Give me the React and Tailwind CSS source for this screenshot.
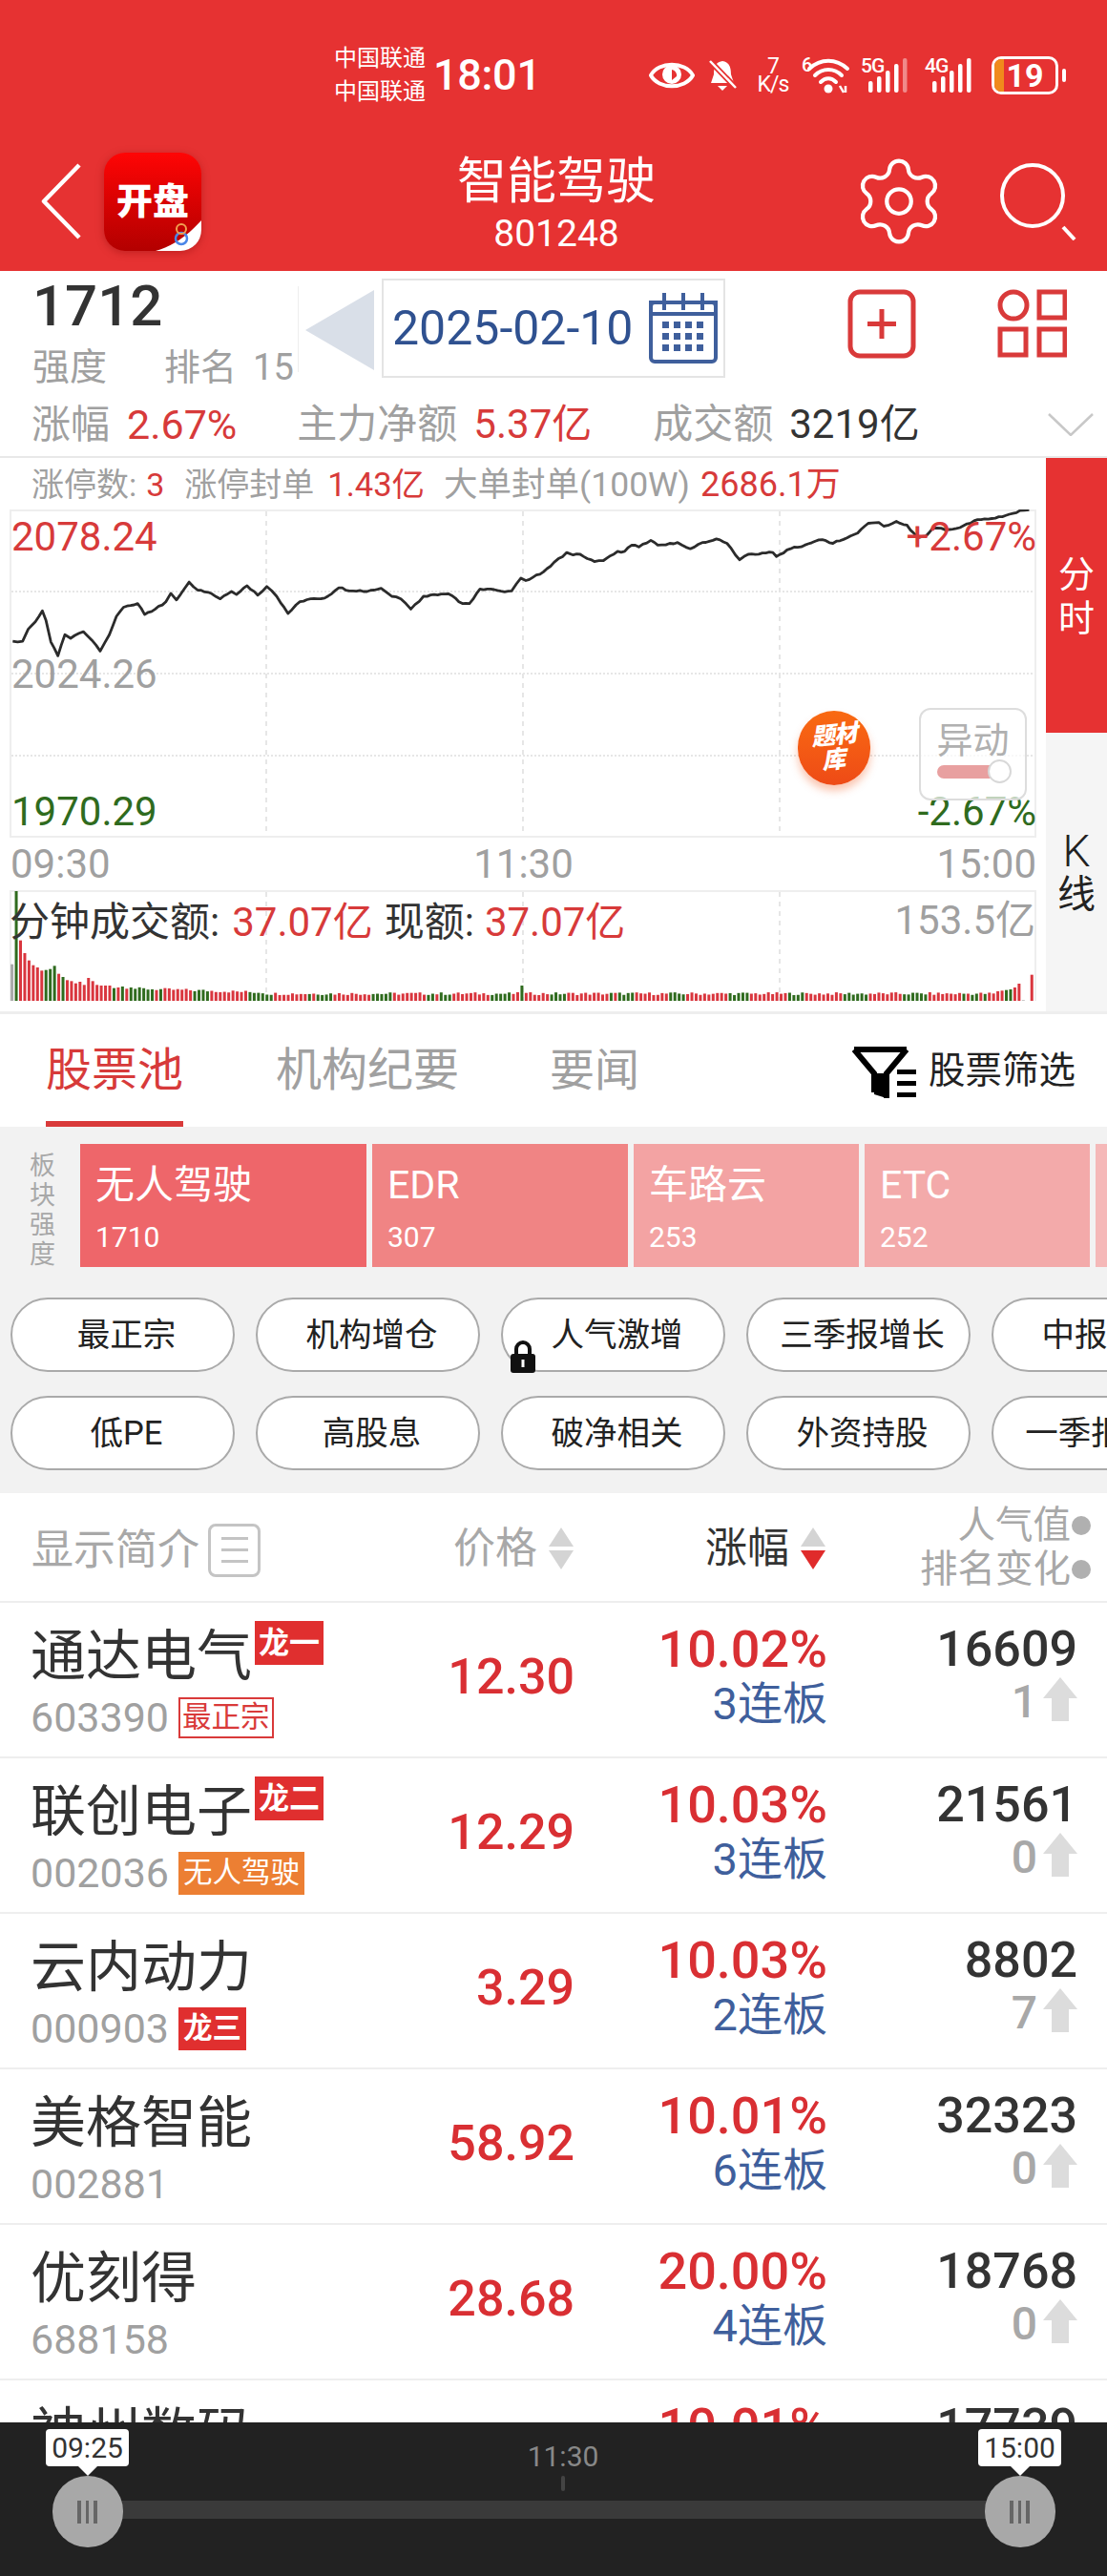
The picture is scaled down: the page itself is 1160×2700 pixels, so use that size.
import React from "react";
import { Settings } from "lucide-react";

const noise = (i) => {
  const s = Math.sin(i * 12.9898) * 43758.5453;
  return s - Math.floor(s);
};

const rawPts = [[18,528],[32,528],[40,495],[50,475],[60,445],[65,470],[72,530],[82,568],[92,510],[100,520],[118,502],[130,525],[142,555],[155,510],[165,460],[175,435],[195,425],[205,455],[220,440],[235,420],[242,397],[250,415],[268,366],[280,388],[300,398],[312,412],[328,392],[335,400],[350,376],[365,402],[378,378],[392,405],[408,452],[425,420],[440,412],[460,410],[480,382],[500,390],[520,392],[540,383],[555,405],[568,412],[582,440],[600,405],[615,400],[635,398],[655,425],[665,425],[680,385],[695,385],[715,393],[725,390],[738,355],[745,362],[770,338],[785,312],[803,285],[812,292],[822,290],[842,310],[855,307],[875,282],[885,282],[895,265],[905,270],[922,252],[932,265],[960,258],[978,275],[995,258],[1015,248],[1030,260],[1048,305],[1060,290],[1095,285],[1100,296],[1120,275],[1140,265],[1165,250],[1180,260],[1200,245],[1215,232],[1230,205],[1245,203],[1252,213],[1270,200],[1285,210],[1300,245],[1312,240],[1322,218],[1345,222],[1365,212],[1385,195],[1405,192],[1435,178],[1445,170],[1458,168]];
const linePts = rawPts
  .flatMap(([x, y], i) => {
    const next = rawPts[i + 1];
    const out = [[x / 1.352 - 10, y / 2.613 + 470 - 534]];
    if (next) {
      const steps = Math.max(1, Math.floor((next[0] - x) / 5));
      for (let k = 1; k < steps; k++) {
        const t = k / steps;
        out.push([
          (x + (next[0] - x) * t) / 1.352 - 10,
          (y + (next[1] - y) * t) / 2.613 + 470 - 534 + (noise(i * 7 + k) - 0.5) * 1.8,
        ]);
      }
    }
    return out;
  })
  .map(([x, y]) => `${x.toFixed(1)},${y.toFixed(1)}`)
  .join(" ");

const headBars = [[115,"#aaa"],[345,"#2f6b1e"],[190,"#d9363e"],[150,"#d9363e"],[127,"#d9363e"],[112,"#d9363e"],[105,"#d9363e"],[95,"#d9363e"],[97,"#2f6b1e"],[100,"#2f6b1e"],[110,"#2f6b1e"],[85,"#d9363e"],[75,"#2f6b1e"],[65,"#d9363e"],[62,"#d9363e"],[55,"#d9363e"],[60,"#d9363e"],[50,"#d9363e"],[72,"#d9363e"],[62,"#d9363e"],[50,"#d9363e"],[48,"#d9363e"],[48,"#d9363e"],[48,"#d9363e"],[40,"#2f6b1e"],[42,"#d9363e"],[45,"#2f6b1e"],[38,"#d9363e"],[42,"#2f6b1e"]];
const tailBars = [[30,"#d9363e"],[32,"#d9363e"],[34,"#2f6b1e"],[36,"#2f6b1e"],[42,"#d9363e"],[54,"#d9363e"],[2,"#aaa"],[0,"#fff"],[82,"#d9363e"]];
const bars = [];
for (let i = 0; i < 241; i++) {
  let h, c;
  if (i < headBars.length) [h, c] = headBars[i];
  else if (i >= 241 - tailBars.length) [h, c] = tailBars[i - (241 - tailBars.length)];
  else {
    const decay = i < 60 ? 36 - (i - 29) * 0.4 : 20;
    h = decay + noise(i) * 9 - 2;
    c = Math.sin(i * 0.45) + noise(i + 300) * 1.2 > 1.05 ? "#2f6b1e" : "#d9363e";
    if (i === 120) { h = 48; c = "#2f6b1e"; }
  }
  bars.push({ x: (15 + i * 6.02) / 1.352 - 10, h: h / 3, c });
}

const tiles = [
  { t: "无人驾驶", n: "1710", w: "w-[300px]", bg: "bg-[#ee666a]" },
  { t: "EDR", n: "307", w: "w-[268px]", bg: "bg-[#f08484]" },
  { t: "车路云", n: "253", w: "w-[236px]", bg: "bg-[#f3a3a3]" },
  { t: "ETC", n: "252", w: "w-[236px]", bg: "bg-[#f3aaaa]" },
  { t: "", n: "", w: "w-[100px]", bg: "bg-[#f5b8b8]" },
];
const pills1 = ["最正宗", "机构增仓", "人气激增", "三季报增长", "中报增长"];
const pills2 = ["低PE", "高股息", "破净相关", "外资持股", "一季报增长"];

const rows = [
  { name: "通达电气", code: "603390", dragon: "龙一", tag: "最正宗", tagType: "outline", price: "12.30", pct: "10.02%", lb: "3连板", pop: "16609", rank: "1" },
  { name: "联创电子", code: "002036", dragon: "龙二", tag: "无人驾驶", tagType: "orange", price: "12.29", pct: "10.03%", lb: "3连板", pop: "21561", rank: "0" },
  { name: "云内动力", code: "000903", tag: "龙三", tagType: "red", price: "3.29", pct: "10.03%", lb: "2连板", pop: "8802", rank: "7" },
  { name: "美格智能", code: "002881", price: "58.92", pct: "10.01%", lb: "6连板", pop: "32323", rank: "0" },
  { name: "优刻得", code: "688158", price: "28.68", pct: "20.00%", lb: "4连板", pop: "18768", rank: "0" },
  { name: "神州数码", code: "000034", price: "38.56", pct: "10.01%", lb: "2连板", pop: "17739", rank: "0" },
];

function SortArrows({ active }) {
  return (
    <svg width="26" height="44" viewBox="0 0 26 44" className="shrink-0">
      <path d="M13 0 L26 20 L0 20 Z" fill="#d4d4d4" />
      <path d="M13 44 L26 24 L0 24 Z" fill={active ? "#e02b2b" : "#d4d4d4"} />
    </svg>
  );
}

function Signal({ label, faded }) {
  return (
    <div className="flex items-end relative w-[56px] h-[40px]">
      <span className="absolute left-0 top-[-2px] text-[21px] leading-[24px] font-medium text-white tracking-[-1px]">{label}</span>
      <svg width="56" height="40" viewBox="0 0 56 40">
        {[[8,12],[17,17],[26,23],[35,30]].map(([x, h]) => (
          <rect key={x} x={x} y={38 - h} width="4.5" height={h} rx="2" fill="#fff" />
        ))}
        <rect x="44" y="2" width="4.5" height="36" rx="2" fill={faded ? "#f08a8a" : "#fff"} />
      </svg>
    </div>
  );
}

function StatusBar() {
  return (
    <div className="flex items-center h-[57px] mt-[50px] ml-[350px] text-white">
      <div className="w-[96px] text-[24px] leading-[35px]">
        <div>中国联通</div>
        <div>中国联通</div>
      </div>
      <div className="ml-[8px] w-[109px] text-[45px] leading-[50px] font-medium tracking-[-0.3px]">18:01</div>
      <svg className="ml-[117px]" width="48" height="34" viewBox="0 0 48 34">
        <path d="M2 17 C10 2 38 2 46 17 C38 32 10 32 2 17 Z" fill="none" stroke="#fff" strokeWidth="4" />
        <circle cx="24" cy="16" r="10" fill="#fff" />
        <path d="M24 11 A6 6 0 0 1 29 18 L24 22 Z" fill="#e63232" />
      </svg>
      <svg className="ml-[13px]" width="32" height="36" viewBox="0 0 32 36">
        <path d="M16 3 C8 4 7 11 7 17 L4 26 L28 26 L25 17 C25 11 24 4 16 3 Z" fill="#fff" />
        <path d="M11 29 H21 L16 34 Z" fill="#fff" />
        <path d="M3 3 L30 31" stroke="#e63232" strokeWidth="6" />
        <path d="M3 3 L30 31" stroke="#fff" strokeWidth="2.5" />
      </svg>
      <div className="ml-[18px] w-[38px] flex flex-col items-center text-[23px] leading-[19px] tracking-[-1px]">
        <span>7</span>
        <span>K/s</span>
      </div>
      <div className="ml-[11px] relative w-[52px] h-[38px]">
        <span className="absolute left-0 top-[-2px] text-[20px] leading-[20px] font-medium">6</span>
        <svg width="52" height="38" viewBox="0 0 52 38">
          <path d="M8 12 C20 1 36 1 48 12" fill="none" stroke="#fff" strokeWidth="4" strokeLinecap="round" />
          <path d="M14 19 C22 11 34 11 42 19" fill="none" stroke="#fff" strokeWidth="4" strokeLinecap="round" />
          <path d="M20 26 C25 21 31 21 36 26" fill="none" stroke="#fff" strokeWidth="4" strokeLinecap="round" />
          <circle cx="28" cy="33" r="4.5" fill="#fff" />
          <path d="M40 30 L44 37 M46 37 L46 30" stroke="#fff" strokeWidth="2.5" />
        </svg>
      </div>
      <div className="ml-[10px]"><Signal label="5G" faded /></div>
      <div className="ml-[11px]"><Signal label="4G" /></div>
      <div className="ml-[14px] relative w-[70px] h-[40px] rounded-[10px] border-[3px] border-white overflow-hidden flex items-center justify-center">
        <div className="absolute left-0 top-0 bottom-0 w-[10px] bg-[#f08a1c]" />
        <span className="relative text-[34px] leading-[36px] font-bold">19</span>
      </div>
      <div className="ml-[4px] w-[4px] h-[14px] bg-white rounded-full" />
    </div>
  );
}

function Logo() {
  return (
    <div className="relative w-[102px] h-[103px] rounded-[22px] overflow-hidden bg-gradient-to-b from-[#ff0505] to-[#b30000] flex items-center justify-center shadow-[0_2px_8px_rgba(120,0,0,0.35)]">
      <span className="text-[38px] leading-[44px] font-black text-white whitespace-nowrap">开盘</span>
      <svg className="absolute right-0 bottom-0" width="48" height="32" viewBox="0 0 48 32">
        <path d="M0 32 C14 28 30 20 48 0 L48 32 Z" fill="#fff" />
        <circle cx="27" cy="19" r="6" fill="none" stroke="#4a86e8" strokeWidth="2.5" />
        <circle cx="27" cy="9" r="5" fill="none" stroke="#f0a050" strokeWidth="2" />
      </svg>
    </div>
  );
}

function Nav() {
  return (
    <div className="flex items-center h-[124px] mt-[42px] text-white">
      <div className="w-[373px] flex items-center">
        <svg className="ml-[43px]" width="42" height="80" viewBox="0 0 42 80">
          <path d="M40 2 L3 40 L40 78" fill="none" stroke="#fff" strokeWidth="4.5" strokeLinejoin="round" />
        </svg>
        <div className="ml-[24px]"><Logo /></div>
      </div>
      <div className="w-[420px] flex flex-col items-center pt-[4px]">
        <div className="text-[52px] leading-[64px]">智能驾驶</div>
        <div className="text-[39px] leading-[44px]">801248</div>
      </div>
      <div className="flex items-center pl-[98px]">
        <Settings size={102} strokeWidth={1} color="#fff" />
        <svg className="ml-[55px]" width="80" height="82" viewBox="0 0 80 82">
          <circle cx="34" cy="35" r="32" fill="none" stroke="#fff" strokeWidth="4" />
          <path d="M66 68 L78 81" stroke="#fff" strokeWidth="4" />
        </svg>
      </div>
    </div>
  );
}

function InfoPanel() {
  return (
    <div className="h-[194px] bg-white">
      <div className="flex h-[136px]">
        <div className="w-[312px] pl-[34px] pt-[7px]">
          <div className="text-[60px] leading-[60px] font-medium text-[#333]">1712</div>
          <div className="flex mt-[12px] text-[39px] leading-[44px] text-[#a0a0a0]">
            <span>强度</span>
            <span className="ml-[60px] text-[38px]">排名</span>
            <span className="ml-[17px] text-[38px]">15</span>
          </div>
        </div>
        <div className="w-px h-[90px] mt-[16px] bg-[#eeeeee]" />
        <svg className="ml-[7px] mt-[20px]" width="72" height="84" viewBox="0 0 72 84">
          <path d="M72 0 L72 84 L0 42 Z" fill="#d9dfe8" />
        </svg>
        <div className="ml-[8px] mt-[8px] w-[360px] h-[104px] border-2 border-[#e4e4e4] flex items-center pl-[9px]">
          <span className="text-[50px] leading-[50px] text-[#2f5190] w-[269px] whitespace-nowrap">2025-02-10</span>
          <svg width="72" height="74" viewBox="0 0 72 74">
            <rect x="2" y="10" width="68" height="62" rx="4" fill="none" stroke="#3f5f9c" strokeWidth="4" />
            <rect x="2" y="10" width="68" height="12" fill="none" stroke="#3f5f9c" strokeWidth="4" />
            {[16, 36, 56].map((x) => <path key={x} d={`M${x} 0 V18`} stroke="#3f5f9c" strokeWidth="4" />)}
            {[30, 42, 54].map((y) => [14, 26, 38, 50].map((x) => (
              <rect key={`${x}-${y}`} x={x} y={y} width="7" height="7" fill="#3f5f9c" />
            )))}
          </svg>
        </div>
        <svg className="ml-[128px] mt-[19px]" width="72" height="73" viewBox="0 0 72 73">
          <rect x="3" y="3" width="66" height="67" rx="10" fill="none" stroke="#d93a3a" strokeWidth="5" />
          <path d="M36 21 V52 M21 36.5 H51" stroke="#d93a3a" strokeWidth="5" />
        </svg>
        <svg className="ml-[85px] mt-[19px]" width="73" height="72" viewBox="0 0 73 72">
          <circle cx="17" cy="17" r="14" fill="none" stroke="#d93a3a" strokeWidth="5" />
          <rect x="44" y="3" width="27" height="27" fill="none" stroke="#d93a3a" strokeWidth="5" />
          <rect x="3" y="42" width="27" height="27" fill="none" stroke="#d93a3a" strokeWidth="5" />
          <rect x="44" y="42" width="27" height="27" fill="none" stroke="#d93a3a" strokeWidth="5" />
        </svg>
      </div>
      <div className="flex items-center h-[50px] pl-[33px] text-[42px] leading-[50px] whitespace-nowrap">
        <span className="text-[#a0a0a0] text-[41px]">涨幅</span>
        <span className="ml-[18px] text-[#d73a3a] text-[43px]">2.67%</span>
        <span className="ml-[63px] text-[#a0a0a0]">主力净额</span>
        <span className="ml-[17px] text-[#d73a3a]">5.37亿</span>
        <span className="ml-[64px] text-[#a0a0a0]">成交额</span>
        <span className="ml-[17px] text-[#333]">3219亿</span>
        <svg className="ml-[134px]" width="48" height="24" viewBox="0 0 48 24">
          <path d="M1 1 L24 23 L47 1" fill="none" stroke="#c8c8c8" strokeWidth="2.5" />
        </svg>
      </div>
    </div>
  );
}

function Chart() {
  return (
    <div className="relative ml-[10px] w-[1076px] h-[344px] border-2 border-[#eeeeee]">
      <svg className="absolute left-[-2px] top-[-2px]" width="1076" height="344" viewBox="0 0 1076 344">
        {[86, 172, 258].map((y) => <path key={y} d={`M2 ${y} H1074`} stroke="#e6e6e6" strokeWidth="2" strokeDasharray="2 2" />)}
        {[269, 538, 807].map((x) => <path key={x} d={`M${x} 2 V342`} stroke="#e6e6e6" strokeWidth="2" strokeDasharray="5 5" />)}
        <polyline points={linePts} fill="none" stroke="#2b2b2b" strokeWidth="2.8" strokeLinejoin="round" />
      </svg>
      <span className="absolute left-[0px] top-[2px] text-[42px] leading-[50px] text-[#d73a3a]">2078.24</span>
      <span className="absolute right-[-2px] top-[2px] text-[42px] leading-[50px] text-[#d73a3a]">+2.67%</span>
      <span className="absolute left-[0px] top-[146px] text-[42px] leading-[50px] text-[#a0a0a0]">2024.26</span>
      <span className="absolute left-[0px] top-[290px] text-[42px] leading-[50px] text-[#2f6b1e]">1970.29</span>
      <span className="absolute right-[-2px] top-[290px] text-[42px] leading-[50px] text-[#2f6b1e]">-2.67%</span>
      <div className="absolute left-[824px] top-[209px] w-[76px] h-[78px] rounded-full bg-gradient-to-b from-[#f96a12] to-[#ee4a16] shadow-[0_6px_8px_rgba(240,90,30,0.35)] flex flex-col items-center justify-center text-white font-black italic leading-[26px] text-[25px]">
        <span className="tracking-[-1px] -rotate-6">题材</span>
        <span className="-rotate-6">库</span>
      </div>
      <div className="absolute left-[951px] top-[206px] w-[113px] h-[97px] rounded-[12px] border-2 border-[#dddddd] bg-white/70 flex flex-col items-center pt-[10px]">
        <span className="text-[38px] leading-[44px] text-[#b0b0b0]">异动</span>
        <div className="relative mt-[4px] w-[76px] h-[14px] rounded-full bg-[#e8a0a0]">
          <div className="absolute right-[-2px] top-[-6px] w-[25px] h-[25px] rounded-full bg-white border-2 border-[#d8d8d8]" />
        </div>
      </div>
    </div>
  );
}

function Volume() {
  return (
    <div className="relative ml-[10px] w-[1076px] h-[116px] border-2 border-b-0 border-[#eeeeee]">
      <svg className="absolute left-[-2px] top-[-2px]" width="1076" height="116" viewBox="0 0 1076 116">
        {[269, 538, 807].map((x) => <path key={x} d={`M${x} 2 V116`} stroke="#e6e6e6" strokeWidth="2" strokeDasharray="5 5" />)}
        {bars.map((b, i) => (
          <rect key={i} x={b.x} y={116 - b.h} width="3" height={b.h} fill={b.c} />
        ))}
      </svg>
      <div className="absolute left-[-2px] top-[8px] flex text-[42px] leading-[48px] whitespace-nowrap">
        <span className="text-[#333]">分钟成交额:</span>
        <span className="ml-[13px] text-[#d73a3a]">37.07亿</span>
        <span className="ml-[12px] text-[#333]">现额:</span>
        <span className="ml-[11px] text-[#d73a3a]">37.07亿</span>
      </div>
      <span className="absolute right-[-1px] top-[6px] text-[42px] leading-[48px] text-[#a0a0a0]">153.5亿</span>
    </div>
  );
}

function ChartSection() {
  return (
    <div className="flex h-[582px] border-t-2 border-[#e8e8e8]">
      <div className="w-[1096px]">
        <div className="flex items-center h-[54px] pl-[33px] pt-[2px] text-[34px] leading-[40px] whitespace-nowrap text-[#a0a0a0]">
          <span>涨停数:</span>
          <span className="ml-[10px] text-[#d73a3a]">3</span>
          <span className="ml-[21px]">涨停封单</span>
          <span className="ml-[14px] text-[#d73a3a] text-[34.5px]">1.43亿</span>
          <span className="ml-[20px] text-[35.5px]">大单封单(100W)</span>
          <span className="ml-[11px] text-[#d73a3a] text-[36px]">2686.1万</span>
        </div>
        <Chart />
        <div className="flex justify-between items-center h-[55px] ml-[11px] w-[1075px] text-[42px] leading-[50px] text-[#a0a0a0]">
          <span>09:30</span>
          <span>11:30</span>
          <span>15:00</span>
        </div>
        <Volume />
      </div>
      <div className="w-[64px] flex flex-col">
        <div className="h-[288px] bg-[#e63232] flex flex-col items-center justify-center pt-[2px] text-white text-[38px] leading-[46px]">
          <span>分</span>
          <span>时</span>
        </div>
        <div className="flex-1 bg-[#f5f5f5] flex flex-col items-center pt-[101px] text-[#222] text-[40px] leading-[46px]">
          <span className="font-light text-[46px]">K</span>
          <span>线</span>
        </div>
      </div>
    </div>
  );
}

function Tabs() {
  return (
    <div className="flex h-[121px] border-t-[3px] border-[#eeeeee] bg-white">
      <div className="ml-[48px] w-[144px] h-[118px] flex flex-col">
        <span className="mt-[31px] text-[48px] leading-[56px] text-[#d73a3a] whitespace-nowrap">股票池</span>
        <div className="mt-auto h-[6px] bg-[#d93a3a]" />
      </div>
      <span className="ml-[97px] mt-[31px] text-[48px] leading-[56px] text-[#a0a0a0] whitespace-nowrap">机构纪要</span>
      <span className="ml-[95px] mt-[31px] text-[47px] leading-[56px] text-[#a0a0a0] whitespace-nowrap">要闻</span>
      <svg className="ml-[222px] mt-[34px]" width="68" height="54" viewBox="0 0 68 54">
        <path d="M3 3 H58 M3 3 L24 28 V48 M58 3 L37 28 V54" fill="none" stroke="#000" strokeWidth="6" />
        <path d="M24 28 V50 L37 54 V28 Z" fill="#000" />
        <rect x="48" y="24" width="20" height="5" fill="#000" />
        <rect x="48" y="36" width="20" height="5" fill="#000" />
        <rect x="48" y="48" width="20" height="5" fill="#000" />
      </svg>
      <span className="ml-[13px] mt-[36px] text-[38.5px] leading-[46px] text-[#222] whitespace-nowrap">股票筛选</span>
    </div>
  );
}

function Pill({ text, lock }) {
  return (
    <div className="relative shrink-0 w-[235px] h-[78px] rounded-[39px] border-2 border-[#aaaaaa] bg-white flex items-center justify-center pl-[8px] text-[34.5px] leading-[40px] text-[#222] whitespace-nowrap overflow-visible">
      {text}
      {lock && (
        <svg className="absolute left-[7px] bottom-[-3px]" width="28" height="34" viewBox="0 0 28 34">
          <path d="M7 16 V9 A7 7 0 0 1 21 9 V16" fill="none" stroke="#111" strokeWidth="4" />
          <rect x="1" y="14" width="26" height="20" rx="3" fill="#111" />
          <rect x="12.5" y="20" width="3" height="8" fill="#fff" />
        </svg>
      )}
    </div>
  );
}

function Sectors() {
  return (
    <div className="h-[384px] bg-[#f2f2f2] overflow-hidden">
      <div className="flex pt-[18px] h-[147px]">
        <div className="w-[84px] shrink-0 pl-[31px] pt-[8px] flex flex-col text-[27px] leading-[31px] text-[#a8a8a8]">
          <span>板</span><span>块</span><span>强</span><span>度</span>
        </div>
        <div className="flex gap-[6px] text-white whitespace-nowrap">
          {tiles.map((t, i) => (
            <div key={i} className={`${t.w} ${t.bg} shrink-0 h-[129px] pl-[16px] pt-[19px]`}>
              <div className="text-[41px] leading-[48px]">{t.t}</div>
              <div className="mt-[14px] text-[30px] leading-[34px]">{t.n}</div>
            </div>
          ))}
        </div>
      </div>
      <div className="flex gap-[22px] pl-[11px] mt-[32px]">
        {pills1.map((p, i) => <Pill key={p} text={p} lock={i === 2} />)}
      </div>
      <div className="flex gap-[22px] pl-[11px] mt-[25px]">
        {pills2.map((p) => <Pill key={p} text={p} />)}
      </div>
    </div>
  );
}

function TableHead() {
  return (
    <div className="flex h-[115px] border-b-2 border-[#eeeeee] bg-white items-center">
      <div className="w-[475px] pl-[33px] pt-[6px] flex items-center">
        <span className="text-[44px] leading-[50px] text-[#a8a8a8] whitespace-nowrap">显示简介</span>
        <div className="ml-[9px] w-[55px] h-[56px] rounded-[8px] border-[3px] border-[#c4c4c4] flex flex-col items-center justify-center gap-[9px]">
          <div className="w-[28px] h-[3px] bg-[#c4c4c4]" />
          <div className="w-[28px] h-[3px] bg-[#c4c4c4]" />
          <div className="w-[28px] h-[3px] bg-[#c4c4c4]" />
        </div>
      </div>
      <div className="w-[125px] pt-[3px] flex items-center gap-[12px]">
        <span className="text-[44px] leading-[50px] text-[#a8a8a8] whitespace-nowrap">价格</span>
        <SortArrows />
      </div>
      <div className="w-[265px] pt-[3px] flex items-center justify-end gap-[12px]">
        <span className="text-[44px] leading-[50px] text-[#333] whitespace-nowrap">涨幅</span>
        <SortArrows active />
      </div>
      <div className="flex-1 flex flex-col items-end pr-[17px] text-[39.5px] leading-[46px] text-[#a8a8a8] whitespace-nowrap">
        <div className="flex items-center gap-[1px]">人气值<span className="w-[20px] h-[20px] rounded-full bg-[#b0b0b0]" /></div>
        <div className="flex items-center gap-[1px]">排名变化<span className="w-[20px] h-[20px] rounded-full bg-[#b0b0b0]" /></div>
      </div>
    </div>
  );
}

function Tag({ text, type }) {
  const cls =
    type === "outline"
      ? "border-2 border-[#d93a3a] bg-white text-[#d93a3a] h-[43px] px-[2px]"
      : type === "orange"
      ? "bg-[#ec7f33] text-white h-[45px] px-[5px]"
      : "bg-[#e02f2f] text-white h-[45px] px-[5px] font-bold";
  return (
    <span className={`ml-[10px] flex items-center text-[30.5px] leading-[36px] whitespace-nowrap ${cls}`}>{text}</span>
  );
}

function Row({ r }) {
  return (
    <div className="flex h-[163px] shrink-0 border-b-2 border-[#eeeeee] bg-white">
      <div className="w-[430px] pl-[32px]">
        <div className="flex h-[97px] items-start">
          <span className="mt-[24px] text-[58px] leading-[64px] text-[#333] whitespace-nowrap">{r.name}</span>
          {r.dragon && (
            <span className="ml-[3px] mt-[19px] w-[72px] h-[46px] bg-[#e02f2f] text-white flex items-center justify-center text-[32px] leading-[36px] font-bold">
              {r.dragon}
            </span>
          )}
        </div>
        <div className="flex items-center h-[46px]">
          <span className="text-[43px] leading-[46px] text-[#a0a0a0]">{r.code}</span>
          {r.tag && <Tag text={r.tag} type={r.tagType} />}
        </div>
      </div>
      <div className="w-[172px] flex justify-end items-center pb-[6px] text-[52px] leading-[60px] font-medium text-[#d92f33]">
        {r.price}
      </div>
      <div className="w-[265px] flex flex-col items-end pt-[22px]">
        <span className="text-[54px] leading-[54px] font-medium text-[#d92f33]">{r.pct}</span>
        <span className="mt-[2px] text-[47px] leading-[56px] text-[#3f5f9c] whitespace-nowrap">{r.lb}</span>
      </div>
      <div className="w-[262px] flex flex-col items-end pt-[22px]">
        <span className="text-[52px] leading-[54px] font-medium text-[#333]">{r.pop}</span>
        <div className="flex items-center h-[56px] mt-0">
          <span className="text-[48px] leading-[56px] font-medium text-[#a8a8a8]">{r.rank}</span>
          <svg className="ml-[6px] mb-[6px]" width="36" height="46" viewBox="0 0 36 46">
            <path d="M18 0 L36 22 L27 22 L27 46 L9 46 L9 22 L0 22 Z" fill="#dcdcdc" />
          </svg>
        </div>
      </div>
    </div>
  );
}

function Thumb({ pos, label }) {
  return (
    <div className={`absolute top-[7px] flex flex-col items-center ${pos}`}>
      <div className="w-[87px] h-[39px] rounded-[4px] bg-white flex items-center justify-center text-[30px] leading-[36px] text-[#333]">{label}</div>
      <svg width="20" height="10" viewBox="0 0 20 10"><path d="M0 0 H20 L10 10 Z" fill="#fff" /></svg>
      <div className="w-[74px] h-[75px] rounded-full bg-[#a8a8a8] flex items-center justify-center gap-[5px]">
        <div className="w-[3.5px] h-[24px] bg-[#666]" />
        <div className="w-[3.5px] h-[24px] bg-[#666]" />
        <div className="w-[3.5px] h-[24px] bg-[#666]" />
      </div>
    </div>
  );
}

function TimeBar() {
  return (
    <div className="relative h-[161px] shrink-0 bg-[#222222]">
      <div className="flex flex-col items-center pt-[18px] pl-[20px] w-full">
        <span className="text-[30px] leading-[36px] text-[#888888]">11:30</span>
        <div className="mt-[2px] w-[4px] h-[16px] rounded-full bg-[#444444]" />
      </div>
      <div className="mx-[92px] mt-[10px] h-[19px] bg-[#3a3a3a]" />
      <Thumb pos="left-[48px]" label="09:25" />
      <Thumb pos="left-[1025px]" label="15:00" />
    </div>
  );
}

export default function App() {
  return (
    <div className="w-[1160px] h-[2700px] overflow-hidden flex flex-col bg-white font-['Roboto','Noto_Sans_CJK_SC',sans-serif]">
      <div className="h-[284px] shrink-0 bg-[#e63232] overflow-hidden">
        <StatusBar />
        <Nav />
      </div>
      <InfoPanel />
      <ChartSection />
      <Tabs />
      <Sectors />
      <TableHead />
      <div className="flex-1 min-h-0 overflow-hidden flex flex-col">
        {rows.map((r) => <Row key={r.name} r={r} />)}
      </div>
      <TimeBar />
    </div>
  );
}
